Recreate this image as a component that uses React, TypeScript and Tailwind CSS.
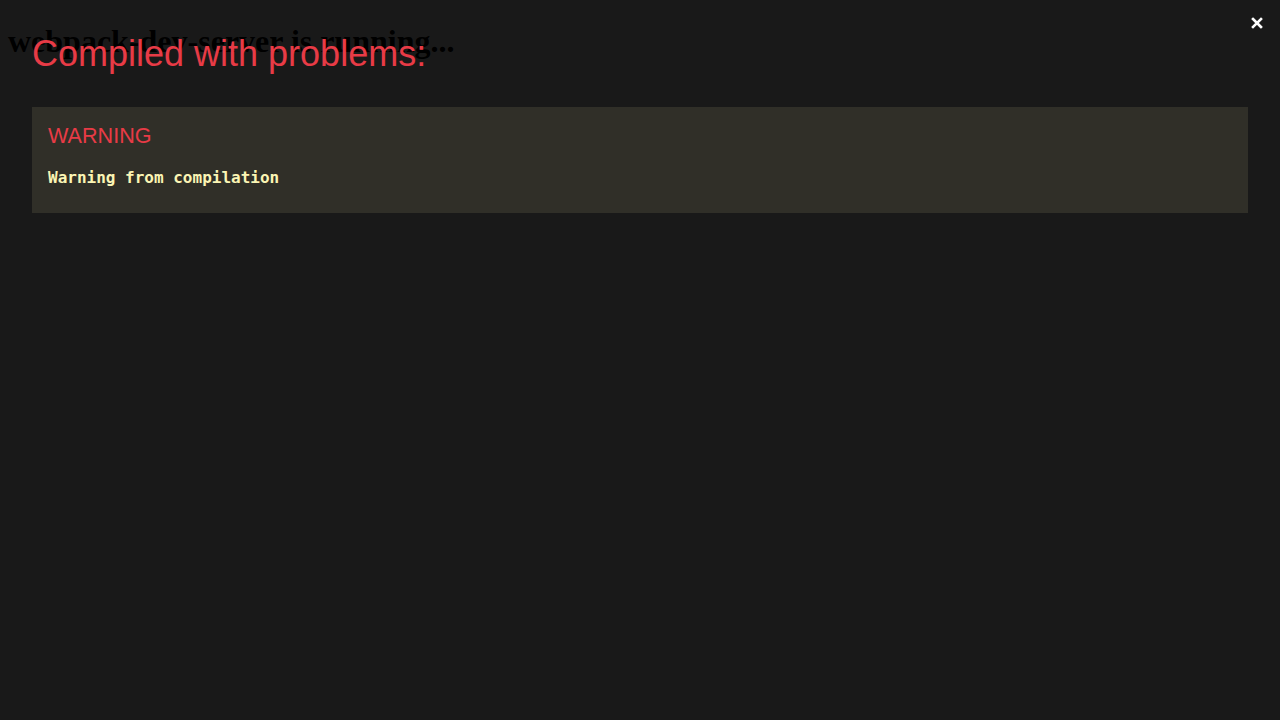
export default function App() {
  return (
    <div className="relative min-h-[720px] bg-white">
      <h1 className="m-0 px-2 pt-[23px] text-[32px] font-bold leading-[37px] text-black [font-family:'Liberation_Serif',serif]">
        webpack-dev-server is running...
      </h1>

      {/* error overlay */}
      <div className="absolute inset-0 bg-[rgba(0,0,0,0.9)] p-8 text-[#e8e8e8]">
        <button className="absolute right-[15px] top-[15px] flex h-4 w-4 items-center justify-center">
          <svg width="12" height="12" viewBox="0 0 12 12">
            <path d="M2 2 L10 10 M10 2 L2 10" stroke="#fff" strokeWidth="2.6" strokeLinecap="square" />
          </svg>
        </button>
        <div className="pt-[1px] text-[36px] leading-[41px] text-[#e83b46] [font-family:'Liberation_Sans',Arial,sans-serif]">
          Compiled with problems:
        </div>
        <div className="mt-[33px] bg-[rgba(251,245,180,0.1)] px-4 pb-[22px] pt-4">
          <div className="mb-[17px] text-[21.6px] leading-[25px] text-[#e83b46] [font-family:'Liberation_Sans',Arial,sans-serif]">
            WARNING
          </div>
          <div className="whitespace-pre text-[16px] font-bold leading-[26px] text-[#fbf5b4] [font-family:'DejaVu_Sans_Mono',monospace]">
            Warning from compilation
          </div>
        </div>
      </div>
    </div>
  );
}
